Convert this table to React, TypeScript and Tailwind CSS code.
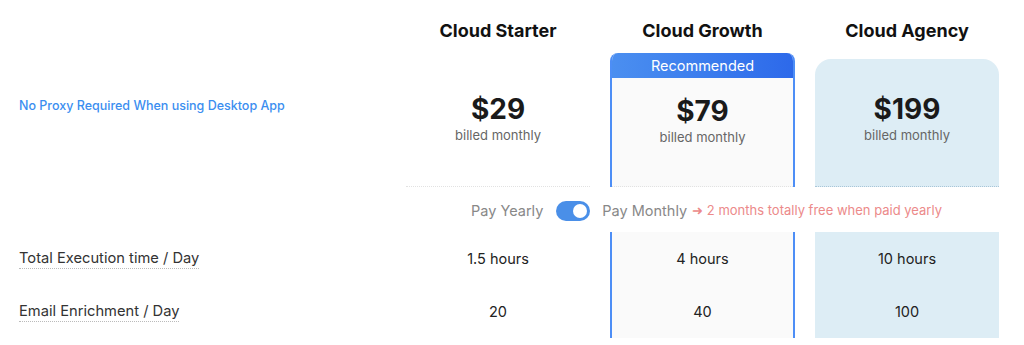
import React from "react";

const plans = [
  { name: "Cloud Starter", price: "$29", hours: "1.5 hours", emails: "20" },
  { name: "Cloud Growth", price: "$79", hours: "4 hours", emails: "40" },
  { name: "Cloud Agency", price: "$199", hours: "10 hours", emails: "100" },
];

const features = [
  { label: "Total Execution time / Day", key: "hours" as const },
  { label: "Email Enrichment / Day", key: "emails" as const },
];

function Price({ price }: { price: string }) {
  return (
    <div className="flex flex-col items-center">
      <span className="text-[28px] font-bold leading-[34px] text-[#1a1a1a]">{price}</span>
      <span className="text-[13px] leading-[18px] text-[#666]">billed monthly</span>
    </div>
  );
}

export default function App() {
  return (
    <div className="w-[1024px] h-[345px] overflow-hidden bg-white font-['Inter','Liberation_Sans',sans-serif]">
      {/* titles */}
      <div className="grid grid-cols-[386px_184px_185px_184px] gap-x-[20px] h-[53px]">
        <div />
        {plans.map((p) => (
          <div key={p.name} className="pt-[19px] text-center text-[18px] font-bold leading-[24px] text-[#111]">
            {p.name}
          </div>
        ))}
      </div>

      {/* prices */}
      <div className="grid grid-cols-[386px_184px_185px_184px] gap-x-[20px] h-[134px]">
        <div className="pl-[19px] pt-[44px] text-[12.5px] font-medium text-[#3b8ef0]">
          No Proxy Required When using Desktop App
        </div>
        <div className="flex flex-col border-b border-dotted border-[#e2e2e2]">
          <div className="pt-[39px]">
            <Price price="$29" />
          </div>
        </div>
        <div className="flex flex-col rounded-t-[8px] overflow-hidden border-x-2 border-[#4d8ef6] bg-[#fafafa]">
          <div className="h-[25px] flex items-center justify-center bg-gradient-to-r from-[#4b8ff0] to-[#2d69ea] text-[14.5px] text-white">
            Recommended
          </div>
          <div className="flex-1 pt-[16px] border-b border-dotted border-[#e2e2e2]">
            <Price price="$79" />
          </div>
        </div>
        <div className="mt-[6px] flex flex-col rounded-t-[16px] bg-[#ddedf5] border-b border-dotted border-[#a9c6d8]">
          <div className="pt-[33px]">
            <Price price="$199" />
          </div>
        </div>
      </div>

      {/* billing toggle */}
      <div className="grid grid-cols-[406px_593px] h-[45px] bg-white">
        <div />
        <div className="flex items-center justify-center pt-[3px] pl-[8px] text-[14.5px]">
          <span className="text-[#888]">Pay Yearly</span>
          <span className="ml-[13px] mr-[12px] flex h-[20px] w-[34px] items-center justify-end rounded-full bg-[#4a8fe8] px-[3px]">
            <span className="h-[14px] w-[14px] rounded-full bg-white" />
          </span>
          <span className="text-[#888]">Pay Monthly</span>
          <span className="ml-[5px] text-[13px] text-[#ec8a8a]">➜ 2 months totally free when paid yearly</span>
        </div>
      </div>

      {/* feature rows */}
      {features.map((f) => (
        <div key={f.key} className="grid grid-cols-[386px_184px_185px_184px] gap-x-[20px] h-[53px]">
          <div className="flex items-center pl-[19px]">
            <span className="border-b border-dotted border-[#bbb] text-[14.7px] leading-[20px] text-[#333]">{f.label}</span>
          </div>
          <div className="flex items-center justify-center text-[14.5px] text-[#222]">{plans[0][f.key]}</div>
          <div className="flex items-center justify-center border-x-2 border-[#4d8ef6] bg-[#fafafa] text-[14.5px] text-[#222]">
            {plans[1][f.key]}
          </div>
          <div className="flex items-center justify-center bg-[#ddedf5] text-[14.5px] text-[#222]">{plans[2][f.key]}</div>
        </div>
      ))}
    </div>
  );
}
